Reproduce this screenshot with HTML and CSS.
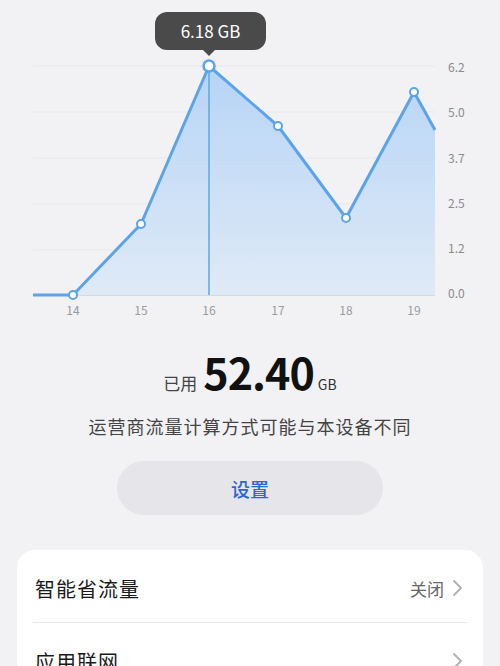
FILE: index.html
```html
<!DOCTYPE html>
<html lang="zh-CN">
<head>
  <meta charset="UTF-8" />
  <meta name="viewport" content="width=device-width, initial-scale=1.0"/>
  <title>流量管理</title>
  <link rel="stylesheet" href="styles.css">
</head>
<body>

  <!-- 图表 -->
  <div class="grafico">
    <svg class="grafico-svg" width="500" height="325" viewBox="0 0 500 325">
      <defs>
        <linearGradient id="preenchimento" x1="0" y1="0" x2="0" y2="1">
          <stop offset="0" stop-color="#b6d4f6"/>
          <stop offset="1" stop-color="#dfeaf7"/>
        </linearGradient>
      </defs>
      <g class="grade">
        <line x1="33" y1="66" x2="435" y2="66"/>
        <line x1="33" y1="112" x2="435" y2="112"/>
        <line x1="33" y1="158" x2="435" y2="158"/>
        <line x1="33" y1="204" x2="435" y2="204"/>
        <line x1="33" y1="250" x2="435" y2="250"/>
      </g>
      <polygon fill="url(#preenchimento)" points="33,295 73,295 141,224 209,66 278,126 346,218 414,92 435,130 435,295"/>
      <line class="base" x1="33" y1="295.5" x2="435" y2="295.5"/>
      <line class="marcador" x1="209" y1="66" x2="209" y2="295"/>
      <polyline class="linha" points="33,295 73,295 141,224 209,66 278,126 346,218 414,92 435,130"/>
      <g class="pontos">
        <circle cx="73" cy="295" r="4"/>
        <circle cx="141" cy="224" r="4"/>
        <circle cx="278" cy="126" r="4"/>
        <circle cx="346" cy="218" r="4"/>
        <circle cx="414" cy="92" r="4"/>
        <circle class="ativo" cx="209" cy="66" r="5.5"/>
      </g>
      <g class="eixo-y">
        <text x="448" y="72">6.2</text>
        <text x="448" y="117">5.0</text>
        <text x="448" y="163">3.7</text>
        <text x="448" y="208">2.5</text>
        <text x="448" y="253">1.2</text>
        <text x="448" y="298">0.0</text>
      </g>
      <g class="eixo-x">
        <text x="73" y="315">14</text>
        <text x="141" y="315">15</text>
        <text x="209" y="315">16</text>
        <text x="278" y="315">17</text>
        <text x="346" y="315">18</text>
        <text x="414" y="315">19</text>
      </g>
    </svg>
    <div class="dica">6.18 GB</div>
  </div>

  <!-- 用量 -->
  <div class="uso">
    <span class="uso-rotulo">已用</span>
    <span class="uso-valor">52.40</span>
    <span class="uso-unidade">GB</span>
  </div>
  <p class="aviso">运营商流量计算方式可能与本设备不同</p>

  <button class="botao">设置</button>

  <!-- 选项 -->
  <div class="cartao">
    <div class="linha-opcao">
      <span class="titulo">智能省流量</span>
      <span class="valor">关闭
        <svg width="11" height="18" viewBox="0 0 11 18"><path d="M2 2 L9 9 L2 16" fill="none" stroke="#b0b0b4" stroke-width="1.8" stroke-linecap="round" stroke-linejoin="round"/></svg>
      </span>
    </div>
    <div class="divisor"></div>
    <div class="linha-opcao">
      <span class="titulo">应用联网</span>
      <span class="valor">
        <svg width="11" height="18" viewBox="0 0 11 18"><path d="M2 2 L9 9 L2 16" fill="none" stroke="#b0b0b4" stroke-width="1.8" stroke-linecap="round" stroke-linejoin="round"/></svg>
      </span>
    </div>
  </div>

</body>
</html>
```

FILE: styles.css
```css
body {
  margin: 0;
  font-family: "Noto Sans CJK SC", "Noto Sans", sans-serif;
  background-color: #f2f2f5;
  color: #1a1a1a;
  width: 500px;
  overflow: hidden;
}

.grafico {
  position: relative;
  height: 325px;
}

.grafico-svg {
  display: block;
}

.grade line {
  stroke: #e7e7ec;
  stroke-width: 1;
}

.base {
  stroke: #d6d9e0;
  stroke-width: 1;
}

.marcador {
  stroke: #5ca4ea;
  stroke-width: 1.5;
}

.linha {
  fill: none;
  stroke: #5ca4ea;
  stroke-width: 3;
  stroke-linejoin: round;
}

.pontos circle {
  fill: #ffffff;
  stroke: #5ca4ea;
  stroke-width: 2;
}

.pontos .ativo {
  stroke-width: 2.5;
}

.eixo-y text {
  font-size: 12px;
  fill: #8a8a90;
}

.eixo-x text {
  font-size: 12px;
  fill: #9a9aa0;
  text-anchor: middle;
}

.dica {
  position: absolute;
  left: 155px;
  top: 12px;
  width: 111px;
  height: 38px;
  line-height: 38px;
  text-align: center;
  background: #4a4a4a;
  color: #ffffff;
  font-size: 17px;
  border-radius: 12px;
}

.dica::after {
  content: "";
  position: absolute;
  left: 47px;
  top: 37px;
  border-left: 7px solid transparent;
  border-right: 7px solid transparent;
  border-top: 7px solid #4a4a4a;
}

.uso {
  display: flex;
  justify-content: center;
  align-items: baseline;
  margin-top: 20px;
  height: 52px;
}

.uso-rotulo {
  font-size: 17px;
  color: #444;
  margin-right: 6px;
}

.uso-valor {
  font-size: 43px;
  font-weight: 700;
  line-height: 52px;
  letter-spacing: -1px;
  color: #111;
}

.uso-unidade {
  font-size: 14px;
  color: #333;
  margin-left: 4px;
}

.aviso {
  margin: 16px 0 0;
  text-align: center;
  font-size: 18px;
  letter-spacing: 1px;
  color: #444;
}

.botao {
  display: block;
  width: 266px;
  height: 54px;
  margin: 22px auto 0;
  border: none;
  border-radius: 27px;
  background-color: #e6e6ea;
  color: #2b66d6;
  font-family: inherit;
  font-size: 19px;
  font-weight: 500;
}

.cartao {
  margin: 35px 17px 0;
  background: #ffffff;
  border-radius: 18px;
  padding: 0 20px 0 18px;
}

.linha-opcao {
  display: flex;
  justify-content: space-between;
  align-items: center;
  height: 72px;
  padding-top: 4px;
  box-sizing: border-box;
}

.titulo {
  font-size: 20px;
  letter-spacing: 1px;
}

.valor {
  display: flex;
  align-items: center;
  gap: 8px;
  font-size: 17px;
  color: #666;
}

.divisor {
  height: 1px;
  background: #e8e8ec;
  margin: 0 0 0 -2px;
  width: 434px;
}
```
